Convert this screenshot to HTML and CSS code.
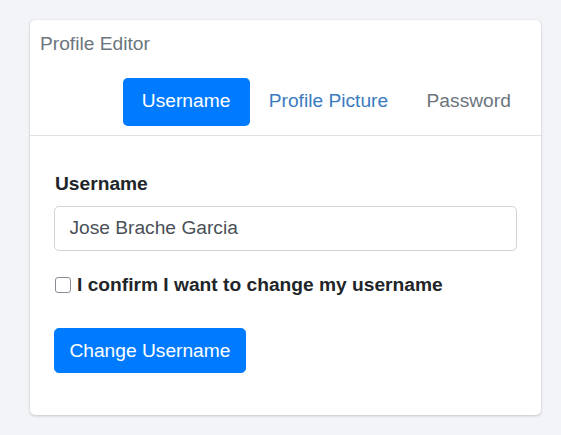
FILE: index.html
```html
<!DOCTYPE html>
<html lang="en">
<head>
<meta charset="utf-8">
<title>Profile Editor</title>
<link rel="stylesheet" href="styles.css">
</head>
<body>
<div class="card">
  <div class="card-header">
    <div class="card-title">Profile Editor</div>
    <nav class="tabs">
      <a class="tab active" href="#">Username</a>
      <a class="tab link" href="#">Profile Picture</a>
      <a class="tab muted" href="#">Password</a>
    </nav>
  </div>
  <div class="card-body">
    <form class="form">
      <label class="field-label" for="username">Username</label>
      <input class="field-input" id="username" type="text" value="Jose Brache Garcia">
      <label class="check">
        <input class="check-box" type="checkbox">
        <span>I confirm I want to change my username</span>
      </label>
      <button class="btn" type="button">Change Username</button>
    </form>
  </div>
</div>
</body>
</html>
```
FILE: styles.css
```css
* { box-sizing: border-box; }
html, body { margin: 0; }
body {
  background: #f3f4f8;
  font-family: "Liberation Sans", Arial, sans-serif;
  font-size: 19.2px;
  line-height: 28.8px;
  color: #212529;
  padding: 20px 20px 20px 30px;
}
.card {
  width: 511px;
  background: #fff;
  border-radius: 5px;
  box-shadow: 0 1px 3px rgba(0, 0, 0, 0.18), 0 0 1px rgba(0, 0, 0, 0.12);
}
.card-header {
  padding: 10px 11px 9px 10px;
  border-bottom: 1px solid #dee2e6;
}
.card-title {
  color: #6c757d;
}
.tabs {
  display: flex;
  justify-content: flex-end;
  margin-top: 19px;
}
.tab {
  display: block;
  padding: 9.6px 19.2px;
  border-radius: 4.8px;
  text-decoration: none;
}
.tab.active { background: #007bff; color: #fff; }
.tab.link { color: #3a7bc0; }
.tab.muted { color: #6c757d; }
.card-body {
  padding: 34px 24px 42px 24px;
}
.form {
  display: flex;
  flex-direction: column;
  align-items: flex-start;
}
.field-label {
  font-weight: bold;
  margin-left: 1px;
  margin-bottom: 7px;
}
.field-input {
  width: 100%;
  height: 45px;
  padding: 7.2px 14.4px;
  font: inherit;
  color: #495057;
  border: 1px solid #ced4da;
  border-radius: 4.8px;
  background: #fff;
}
.check {
  display: flex;
  align-items: center;
  margin-top: 20px;
  font-weight: bold;
}
.check-box {
  appearance: none;
  -webkit-appearance: none;
  width: 16px;
  height: 16px;
  margin: 0 6px 0 1px;
  border: 1.5px solid #8b8b96;
  border-radius: 3px;
  background: #fff;
}
.btn {
  margin-top: 29px;
  height: 45px;
  padding: 7.2px 14.4px;
  font: inherit;
  color: #fff;
  background: #007bff;
  border: 1px solid #007bff;
  border-radius: 4.8px;
}
```
